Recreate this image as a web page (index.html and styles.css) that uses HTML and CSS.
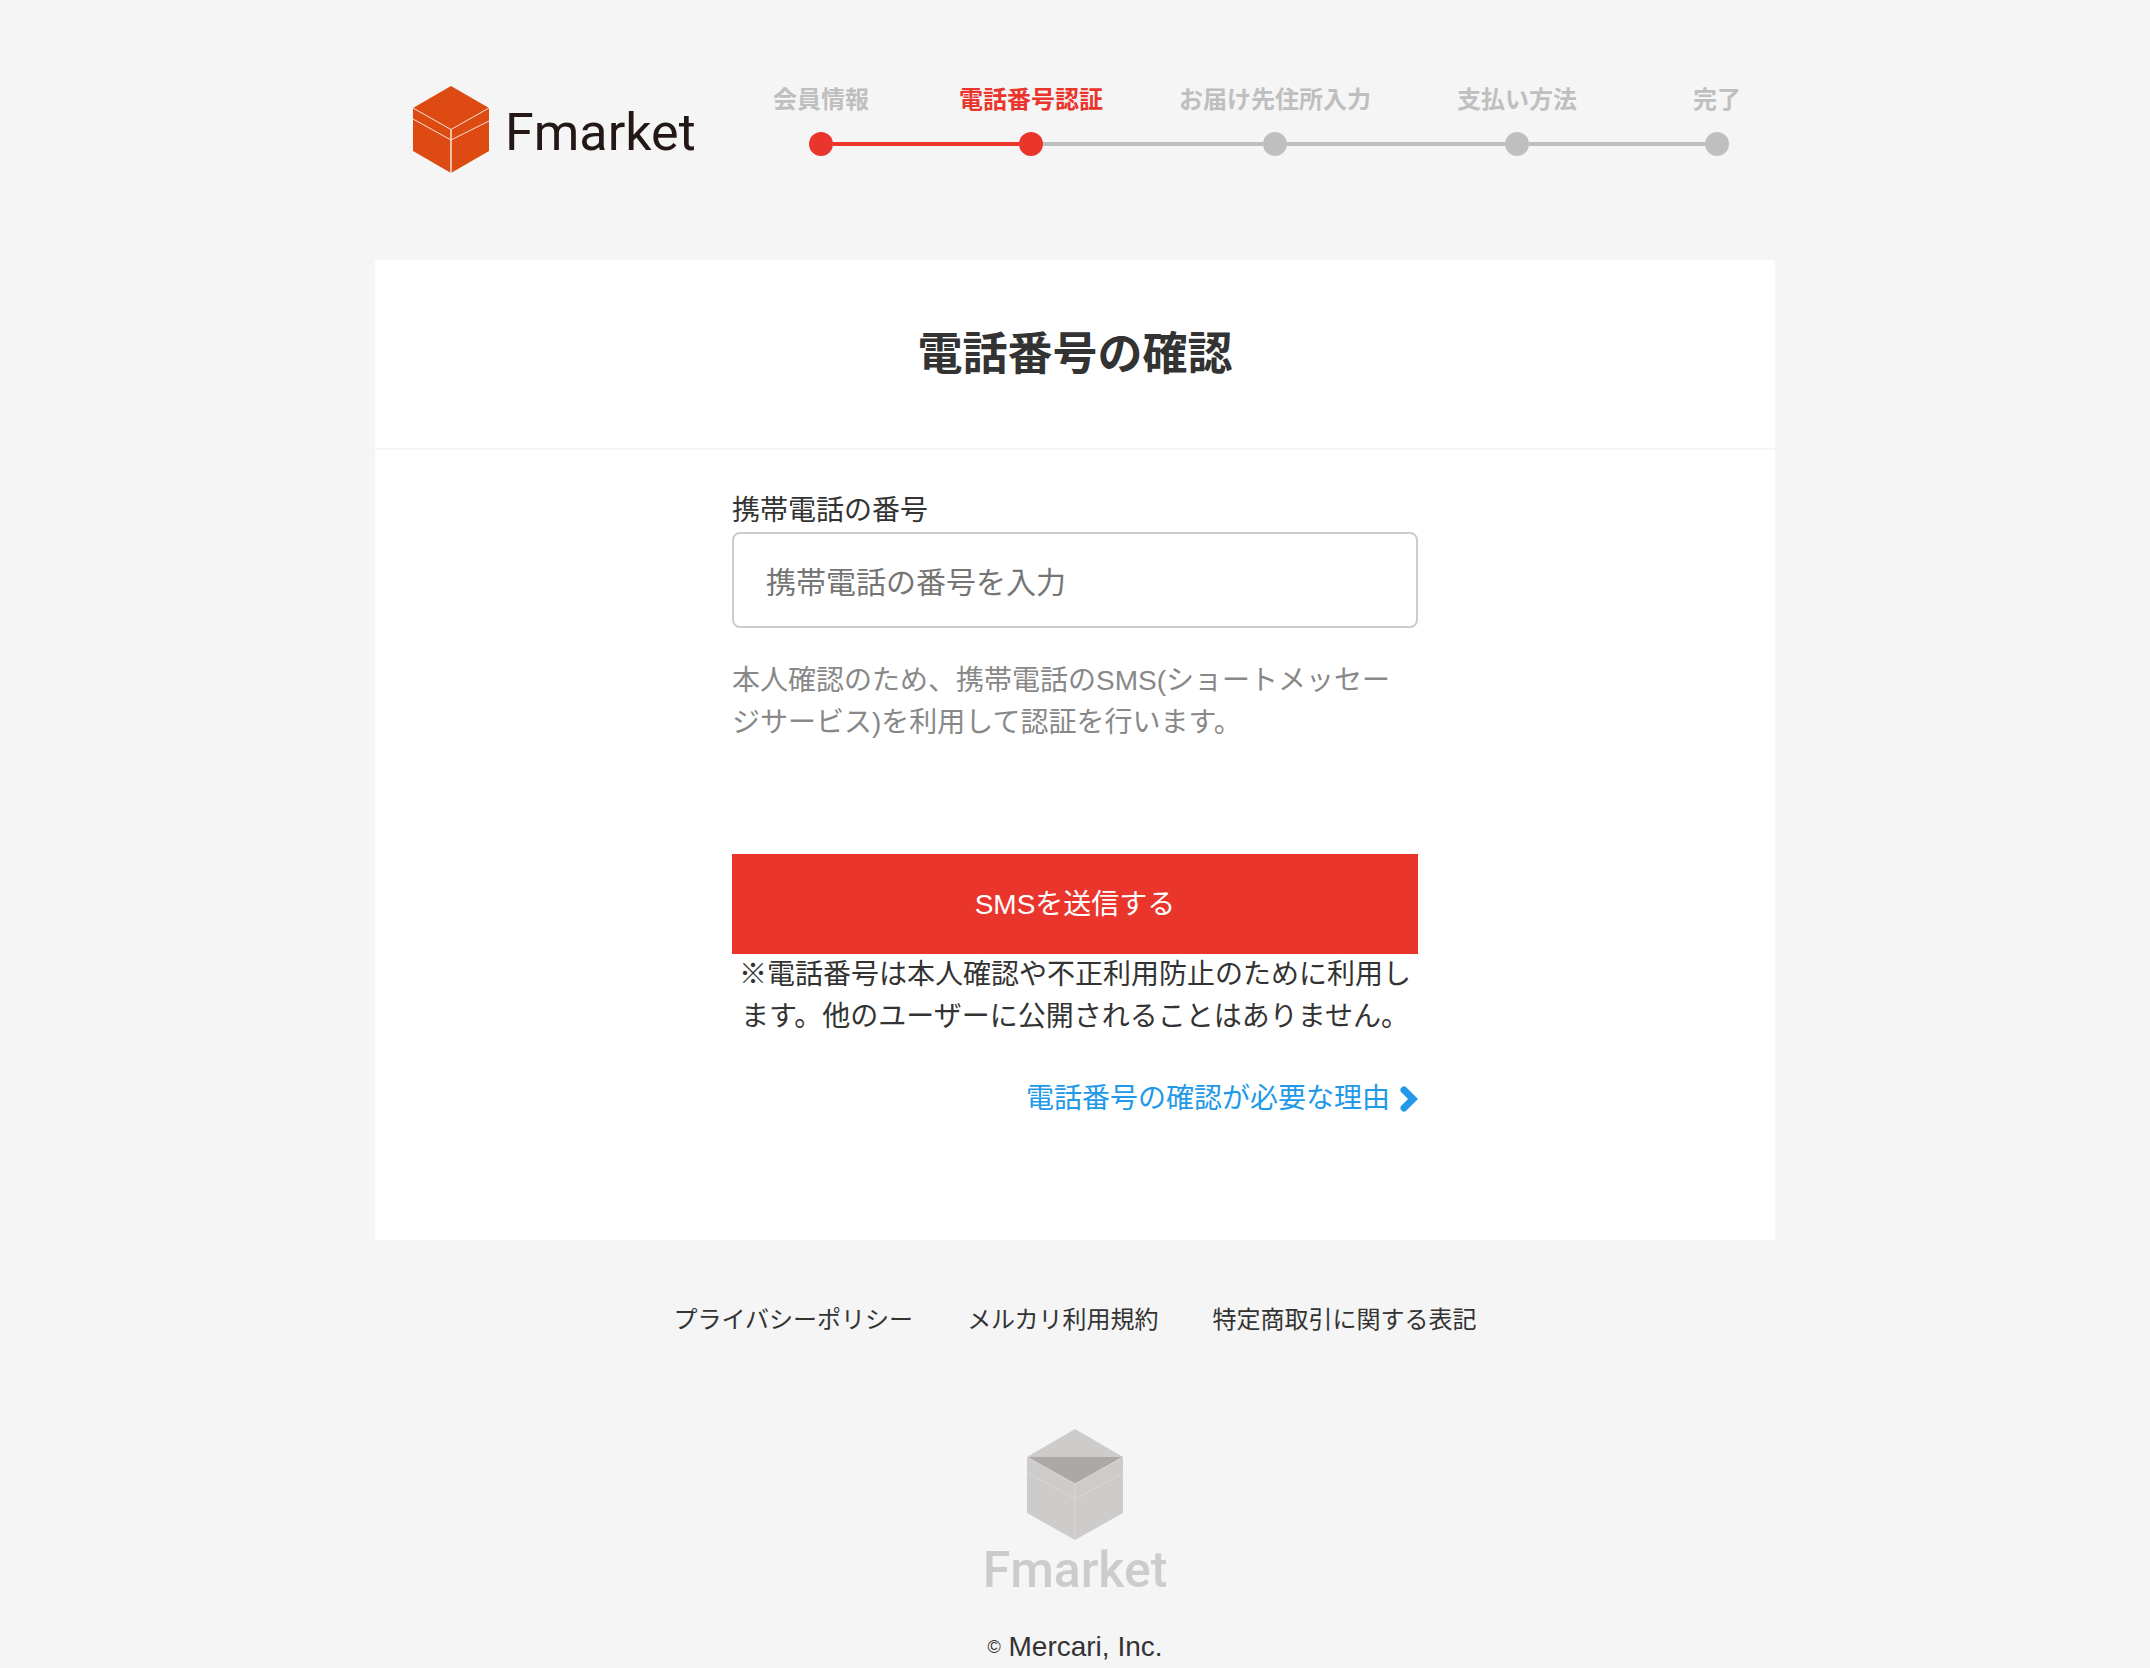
FILE: index.html
```html
<!DOCTYPE html>
<html lang="ja">
    <head>

        <meta charset="utf-8">
        <meta name="viewport" content="width=device-width, initial-scale=1">
        <title>電話番号の確認</title>

        <link rel="stylesheet" href="styles.css">

    </head>
    <body>

        <header class="header">

            <a class="logo" href="#">
                <svg class="logo-icon" viewBox="0 0 76 87" aria-hidden="true">
                    <path fill="#dd4b12" d="M38 0L76 22V65L38 87L0 65V22Z"/>
                    <path fill="none" stroke="#f9e3da" d="M0 22L38 43.5L76 22M0 33L38 54L76 35"/>
                    <path fill="none" stroke="#f9e3da" stroke-width="1.5" d="M38 43.5V87"/>
                </svg>
                <span class="logo-text">Fmarket</span>
            </a>

            <ol class="steps">
                <li class="done"><span>会員情報</span><i class="dot"></i></li>
                <li class="active"><span>電話番号認証</span><i class="dot"></i></li>
                <li><span>お届け先住所入力</span><i class="dot"></i></li>
                <li><span>支払い方法</span><i class="dot"></i></li>
                <li><span>完了</span><i class="dot"></i></li>
            </ol>

        </header>

        <main class="card">

            <h1 class="title">電話番号の確認</h1>

            <form class="form">

                <label class="label" for="tel">携帯電話の番号</label>
                <input class="input" id="tel" type="tel" placeholder="携帯電話の番号を入力">

                <p class="help">本人確認のため、携帯電話のSMS(ショートメッセージサービス)を利用して認証を行います。</p>

                <button class="button" type="submit">SMSを送信する</button>

                <p class="note">※電話番号は本人確認や不正利用防止のために利用します。他のユーザーに公開されることはありません。</p>

                <a class="reason" href="#">
                    電話番号の確認が必要な理由
                    <svg class="arrow" viewBox="0 0 18 26" aria-hidden="true">
                        <path fill="none" stroke="currentColor" stroke-width="7" stroke-linecap="round" d="M4 4L13 13L4 22"/>
                    </svg>
                </a>

            </form>

        </main>

        <footer class="footer">

            <nav class="links">
                <a href="#">プライバシーポリシー</a>
                <a href="#">メルカリ利用規約</a>
                <a href="#">特定商取引に関する表記</a>
            </nav>

            <a class="footer-logo" href="#">
                <svg class="footer-icon" viewBox="0 0 96 111" aria-hidden="true">
                    <path fill="#cdccca" d="M48 0L96 28V84L48 111L0 84V28Z"/>
                    <path fill="#aca8a7" d="M0 28H96L48 55Z"/>
                    <path fill="none" stroke="#d9d8d7" d="M0 28L48 55L96 28M0 43L48 70L96 44M48 55V111"/>
                </svg>
                <span class="footer-text">Fmarket</span>
            </a>

            <p class="copyright"><small>©</small> Mercari, Inc.</p>

        </footer>

    </body>
</html>
```

FILE: styles.css
```css
* {
    box-sizing: border-box;
}
body {
    margin: 0;
    background-color: #f5f5f5;
    color: #333;
    font-family: "Liberation Sans", "Noto Sans CJK JP", sans-serif;
    font-size: 28px;
    line-height: 42px;
}
a {
    color: inherit;
    text-decoration: none;
}

/** Header **/
.header {
    display: flex;
    justify-content: space-between;
    align-items: flex-start;
    max-width: 1400px;
    margin: 0 auto;
    padding: 86px 0 87px 38px;
}

/** Logo **/
.logo {
    display: flex;
    align-items: center;
    gap: 16px;
}
.logo-icon {
    display: block;
    width: 76px;
    height: 87px;
}
.logo-text {
    padding-top: 6px;
    color: #231815;
    font-family: Roboto, sans-serif;
    font-size: 52px;
    line-height: 80px;
}

/** Steps **/
.steps {
    display: grid;
    grid-template-columns: 33fr 72fr 50fr 71fr 29fr;
    width: 1020px;
    margin: 0;
    padding: 0;
    list-style-type: none;
    color: #bfbfbf;
    font-size: 24px;
    font-weight: bold;
    line-height: 28px;
}
.steps li {
    display: grid;
    grid-template-columns: 1fr 24px 1fr;
    align-items: center;
    row-gap: 18px;
}
.steps span {
    grid-column: 1 / 4;
    text-align: center;
    white-space: nowrap;
}
.steps .dot {
    grid-area: 2 / 2;
    height: 24px;
    border-radius: 50%;
    background-color: #bfbfbf;
}
.steps li::before,
.steps li::after {
    content: "";
    grid-row: 2;
    height: 4px;
    background-color: #bfbfbf;
}
.steps li::before {
    grid-column: 1;
}
.steps li::after {
    grid-column: 3;
}
.steps li:first-child::before,
.steps li:last-child::after {
    visibility: hidden;
}
.steps .active {
    color: #ea352d;
}
.steps .done .dot,
.steps .active .dot,
.steps .done::after,
.steps .active::before {
    background-color: #ea352d;
}

/** Card **/
.card {
    max-width: 1400px;
    margin: 0 auto;
    padding-bottom: 120px;
    background-color: #fff;
}
.title {
    margin: 0;
    padding: 62px 0 60px;
    border-bottom: 2px solid #f5f5f5;
    font-size: 45px;
    line-height: 66px;
    text-align: center;
}

/** Form **/
.form {
    display: flex;
    flex-direction: column;
    max-width: 686px;
    margin: 0 auto;
    padding-top: 40px;
}
.label {
    display: block;
}
.input {
    width: 100%;
    height: 96px;
    padding: 6px 32px 0;
    border: 2px solid #ccc;
    border-radius: 8px;
    background-color: #fff;
    color: #333;
    font-family: inherit;
    font-size: 30px;
}
.input::placeholder {
    color: #757575;
}
.help {
    margin: 32px 0 110px;
    padding-right: 16px;
    color: #888;
}
.button {
    width: 100%;
    height: 100px;
    padding: 0 0 4px;
    border: 0;
    background-color: #ea352d;
    color: #fff;
    font-family: inherit;
    font-size: 28px;
    cursor: pointer;
}
.note {
    margin: 0 0 40px;
    text-align: center;
}
.reason {
    display: flex;
    align-items: center;
    align-self: flex-end;
    gap: 10px;
    color: #2199e8;
}
.arrow {
    width: 18px;
    height: 26px;
}

/** Footer **/
.footer {
    display: flex;
    flex-direction: column;
    align-items: center;
    padding-top: 62px;
}
.links {
    display: flex;
    flex-wrap: wrap;
    justify-content: center;
    gap: 54px;
    font-size: 24px;
    line-height: 36px;
}
.footer-logo {
    display: flex;
    flex-direction: column;
    align-items: center;
    margin-top: 91px;
    color: #cdccca;
}
.footer-icon {
    display: block;
    width: 96px;
    height: 111px;
}
.footer-text {
    font-family: Roboto, sans-serif;
    font-size: 50px;
    font-weight: 500;
    line-height: 60px;
}
.copyright {
    margin: 26px 0 0;
}
.copyright small {
    font-size: 18px;
    vertical-align: 3px;
}
```
